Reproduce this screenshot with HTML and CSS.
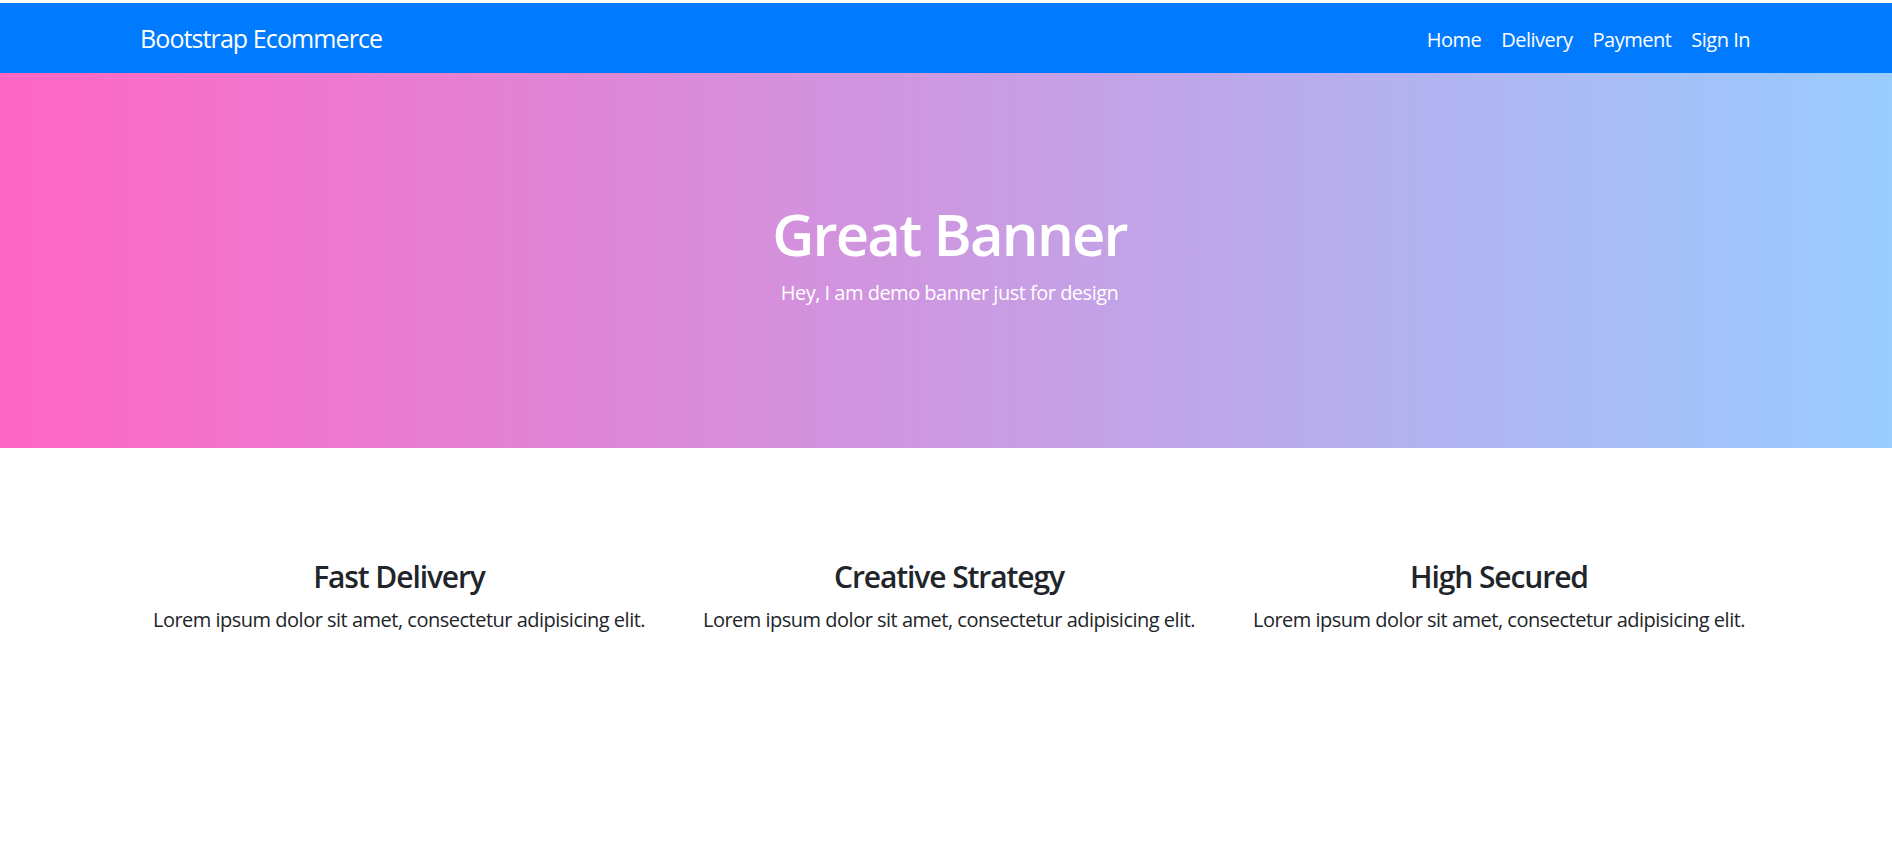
FILE: index.html
```html
<!DOCTYPE html>
<html lang="en">
<head>
<meta charset="utf-8">
<title>Bootstrap Ecommerce</title>
<link rel="stylesheet" href="styles.css">
</head>
<body>
<div class="page">
  <nav class="navbar">
    <div class="nav-inner">
      <a class="brand" href="#">Bootstrap Ecommerce</a>
      <ul class="nav-links">
        <li><a href="#">Home</a></li>
        <li><a href="#">Delivery</a></li>
        <li><a href="#">Payment</a></li>
        <li><a href="#">Sign In</a></li>
      </ul>
    </div>
  </nav>
  <header class="banner">
    <h1 class="banner-title">Great Banner</h1>
    <p class="banner-sub">Hey, I am demo banner just for design</p>
  </header>
  <section class="features">
    <div class="feature">
      <h4 class="feature-title">Fast Delivery</h4>
      <p class="feature-text">Lorem ipsum dolor sit amet, consectetur adipisicing elit.</p>
    </div>
    <div class="feature">
      <h4 class="feature-title">Creative Strategy</h4>
      <p class="feature-text">Lorem ipsum dolor sit amet, consectetur adipisicing elit.</p>
    </div>
    <div class="feature">
      <h4 class="feature-title">High Secured</h4>
      <p class="feature-text">Lorem ipsum dolor sit amet, consectetur adipisicing elit.</p>
    </div>
  </section>
</div>
</body>
</html>
```
FILE: styles.css
```css
html, body {
  margin: 0;
  padding: 0;
  background: #fff;
}
body {
  font-family: "Open Sans", "Noto Sans", "Liberation Sans", sans-serif;
  color: #212529;
}
.page {
  padding-top: 3px;
}
.navbar {
  height: 70px;
  background: #007bff;
}
.nav-inner {
  height: 100%;
  display: flex;
  align-items: center;
  justify-content: space-between;
  padding: 0 132px 0 140px;
}
.brand {
  color: #fff;
  text-decoration: none;
  font-size: 25px;
  line-height: 38px;
  letter-spacing: -0.9px;
}
.nav-links {
  list-style: none;
  margin: 3px 0 0;
  padding: 0;
  display: flex;
}
.nav-links a {
  display: block;
  padding: 0 10px;
  color: #fff;
  text-decoration: none;
  font-size: 20px;
  line-height: 30px;
  letter-spacing: -0.5px;
}
.banner {
  height: 375px;
  box-sizing: border-box;
  padding: 123px 0 0 7px;
  background: linear-gradient(to right, #ff66c4, #99ccff);
  text-align: center;
  color: #fff;
}
.banner-title {
  margin: 0;
  font-size: 58px;
  line-height: 75px;
  font-weight: 600;
  letter-spacing: -1.8px;
}
.banner-sub {
  margin: 7px 0 0;
  font-size: 20px;
  line-height: 30px;
  letter-spacing: -0.5px;
}
.features {
  display: grid;
  grid-template-columns: repeat(3, 550px);
  padding: 111px 0 0 124px;
  text-align: center;
}
.feature-title {
  margin: 0;
  font-size: 30px;
  line-height: 36px;
  font-weight: 600;
  letter-spacing: -1.1px;
}
.feature-text {
  margin: 10px 0 0;
  font-size: 20px;
  line-height: 30px;
  letter-spacing: -0.5px;
}
```
